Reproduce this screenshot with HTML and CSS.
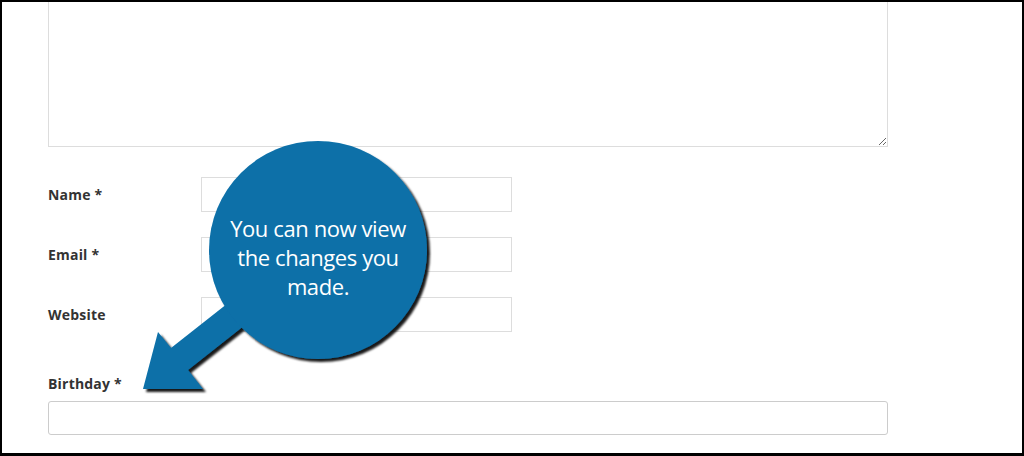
FILE: index.html
```html
<!DOCTYPE html>
<html lang="en">
<head>
  <meta charset="UTF-8" />
  <meta name="viewport" content="width=device-width, initial-scale=1" />
  <title>Comment Form</title>
  <link rel="stylesheet" href="styles.css">
</head>
<body>
  <div class="page">
    <form class="comment-form">
      <textarea class="comment-box"></textarea>

      <div class="field-row">
        <label>Name *</label>
        <input type="text" class="short-input" />
      </div>
      <div class="field-row">
        <label>Email *</label>
        <input type="text" class="short-input" />
      </div>
      <div class="field-row">
        <label>Website</label>
        <input type="text" class="short-input" />
      </div>

      <div class="birthday-field">
        <label>Birthday *</label>
        <input type="text" class="wide-input" />
      </div>
    </form>

    <!-- callout drawn over the form -->
    <svg class="callout" width="1024" height="456" viewBox="0 0 1024 456">
      <defs>
        <filter id="shadow" x="-20%" y="-20%" width="140%" height="140%">
          <feDropShadow dx="3" dy="3" stdDeviation="1" flood-color="#000" flood-opacity="0.9" />
        </filter>
      </defs>
      <g filter="url(#shadow)" fill="#0a6fa8">
        <path d="M143 389 L158 332 L171 348 L280 262 L297 284 L188 370 L203 389 Z" />
        <circle cx="318" cy="250" r="109" />
      </g>
    </svg>
    <div class="callout-text">You can now view<br>the changes you<br>made.</div>
  </div>
</body>
</html>
```

FILE: styles.css
```css
body {
  margin: 0;
  background: #fff;
  font-family: 'Open Sans', sans-serif;
}
.page {
  position: relative;
  height: 456px;
  box-sizing: border-box;
  border: 2px solid #000;
  border-bottom-width: 3px;
  overflow: hidden;
}
.comment-form {
  padding-left: 46px;
  margin-top: -30px;
}
.comment-box {
  display: block;
  width: 840px;
  height: 175px;
  box-sizing: border-box;
  border: 1px solid #ddd;
  margin: 0 0 30px;
  resize: vertical;
}
.field-row {
  display: flex;
  align-items: center;
  height: 35px;
  margin-bottom: 25px;
}
.field-row label,
.birthday-field label {
  font-size: 14px;
  font-weight: bold;
  color: #333;
  letter-spacing: 0.2px;
}
.field-row label {
  width: 153px;
}
.short-input {
  width: 311px;
  height: 35px;
  box-sizing: border-box;
  border: 1px solid #ddd;
  margin: 0;
}
.birthday-field {
  padding-top: 17px;
}
.birthday-field label {
  display: block;
  margin-bottom: 8px;
}
.wide-input {
  display: block;
  width: 840px;
  height: 34px;
  box-sizing: border-box;
  border: 1px solid #ccc;
  border-radius: 3px;
  margin: 0;
}
.callout {
  position: absolute;
  top: -2px;
  left: -2px;
  pointer-events: none;
}
.callout-text {
  position: absolute;
  left: 196px;
  top: 212px;
  width: 240px;
  text-align: center;
  color: #fff;
  font-size: 22px;
  line-height: 29px;
  letter-spacing: -0.4px;
}
```
